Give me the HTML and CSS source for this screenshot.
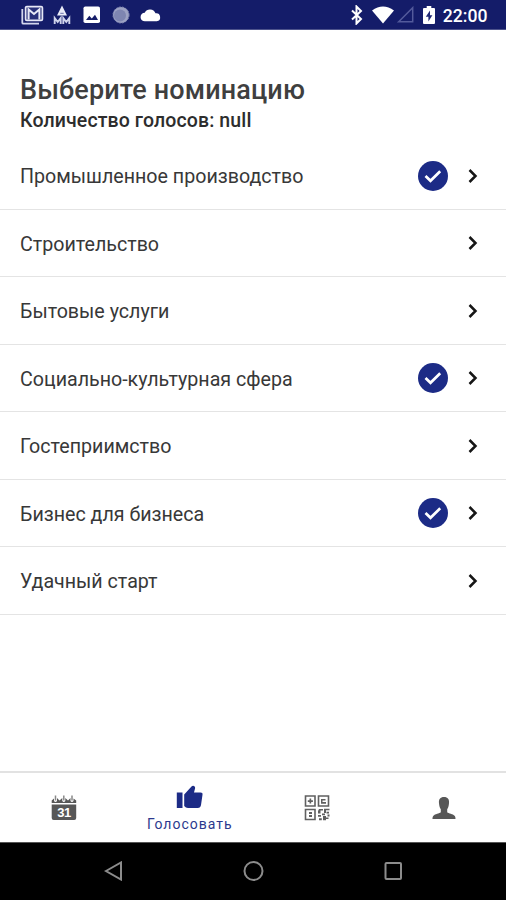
FILE: index.html
```html
<!DOCTYPE html>
<html lang="ru">
<head>
<meta charset="utf-8">
<title>Выберите номинацию</title>
<link rel="stylesheet" href="styles.css">
</head>
<body>
<svg class="defs" aria-hidden="true">
  <symbol id="check" viewBox="0 0 30 30"><circle cx="15" cy="15" r="15" fill="#1c2b86"/><path d="M7.500 15l5 4.800 9.700-9.500" fill="none" stroke="#fff" stroke-width="2.700"/></symbol>
  <symbol id="chevron" viewBox="0 0 10 14"><path d="M1.500 1l6 6-6 6" fill="none" stroke="#161616" stroke-width="2.500"/></symbol>
</svg>
<div class="screen">
  <header class="status">
    <div class="status-left">
      <svg width="23" height="20" viewBox="0 0 23 20"><path d="M1.300 4v13.700q0 1 1 1H18" fill="none" stroke="#d3d6ed" stroke-width="1.800"/><rect x="4.600" y="1.600" width="16.800" height="13.800" rx="1.200" fill="#28307a" stroke="#e6e8f6" stroke-width="1.700"/><path d="M7.600 14.500V4.500L13 9l5.400-4.500v10" fill="none" stroke="#e6e8f6" stroke-width="2"/></svg>
      <svg width="18" height="20" viewBox="0 0 18 20"><path d="M9 .5l5 10H4z" fill="#e9ebf7"/><path d="M7.300 8.300h3.400" stroke="#6970a8"/><path d="M1.700 19v-6l3 4 3-4v6M10.300 19v-6l3 4 3-4v6" fill="none" stroke="#cfd3eb" stroke-width="1.900"/></svg>
      <svg width="18" height="18" viewBox="0 0 18 18"><rect x=".5" y=".5" width="16.500" height="16.500" rx="1.800" fill="#fff"/><path d="M3 14l3.300-4.200 2.500 2.700 3.200-3.700 3 5.200z" fill="#161d69"/></svg>
      <svg width="18" height="18" viewBox="0 0 18 18"><circle cx="9" cy="9" r="8" fill="#9da2c4" stroke="#888eb8" stroke-dasharray="2 1.200"/><circle cx="8" cy="9.500" r="6" fill="#7e85b1"/></svg>
      <svg width="21" height="14" viewBox="0 0 21 14"><path d="M5 13.300A4.300 4.300 0 0 1 4.700 4.700 6 6 0 0 1 15.500 5.300 4 4 0 0 1 16.700 13.300z" fill="#fff"/></svg>
    </div>
    <div class="status-right">
      <svg width="12" height="20" viewBox="0 0 12 20"><path d="M1 5.500l9 8.500-4.500 4.500v-17L10 6l-9 8.500" fill="none" stroke="#fff" stroke-width="2"/></svg>
      <svg width="22" height="18" viewBox="0 0 22 18"><path d="M0 4.500Q11-3.500 22 4.500L11 17.500z" fill="#fff"/></svg>
      <svg width="17" height="17" viewBox="0 0 17 17"><path d="M1.700 15.700L15.700 1.700v14z" fill="none" stroke="#535a9b" stroke-width="1.500"/></svg>
      <svg width="12" height="18" viewBox="0 0 12 18"><path d="M3.700 0h4.600v2H11q1 0 1 1v14q0 1-1 1H1q-1 0-1-1V3q0-1 1-1h2.700z" fill="#fff"/><path d="M7 4.500L2.800 10.700h2.600v4.800l4-6.200H7z" fill="#202875"/></svg>
      <span class="clock">22:00</span>
    </div>
  </header>
  <main>
    <h1>Выберите номинацию</h1>
    <p class="votes">Количество голосов: null</p>
    <ul>
      <li><span class="name">Промышленное производство</span><svg class="check"><use href="#check"/></svg><svg class="chevron"><use href="#chevron"/></svg></li>
      <li><span class="name">Строительство</span><svg class="chevron"><use href="#chevron"/></svg></li>
      <li><span class="name">Бытовые услуги</span><svg class="chevron"><use href="#chevron"/></svg></li>
      <li><span class="name">Социально-культурная сфера</span><svg class="check"><use href="#check"/></svg><svg class="chevron"><use href="#chevron"/></svg></li>
      <li><span class="name">Гостеприимство</span><svg class="chevron"><use href="#chevron"/></svg></li>
      <li><span class="name">Бизнес для бизнеса</span><svg class="check"><use href="#check"/></svg><svg class="chevron"><use href="#chevron"/></svg></li>
      <li><span class="name">Удачный старт</span><svg class="chevron"><use href="#chevron"/></svg></li>
    </ul>
  </main>
  <nav class="tabs">
    <a><svg width="26" height="26" viewBox="0 0 26 26"><path d="M.7 8V5.500L3 3.500V6q1.500 2 3 0V3l2.500 2.500L11.300 3v3q1.500 2 3 0V3l2.700 2.500L19.500 3v3q1.500 2 3 0V3.500l2.700 2V8z" fill="#575757"/><path d="M4.500 .5v5M12.800 .5v5M21 .5v5" stroke="#888" stroke-width="1.500"/><path d="M.7 9.500h24.500V23q0 2-2 2H2.700q-2 0-2-2z" fill="#575757"/><text x="13" y="22.300" class="date">31</text></svg></a>
    <a class="active"><svg width="27" height="24" viewBox="0 0 27 24"><path d="M.8 7.500H6.500V23H.8zM8.200 9.500L15.500 1.500q1.200-1.200 2.500-.5 1.500.8 1.100 2.300L18 7.500h6.500q2.400 0 2 2.200L25 20q-.5 3-3.200 3H12q-2.200 0-3.800-2z" fill="#1c2b86"/></svg><span>Голосовать</span></a>
    <a><svg width="26" height="26" viewBox="0 0 26 26" fill="none" stroke="#606060" stroke-width="1.600"><path d="M1.500 1h9.500v10H1.500zM14.500 1H24.500v10h-10zM1.500 14.500H11v10H1.500z"/><g fill="#606060" stroke="none"><path d="M5.500 3.500h1.700v1.700h1.700v1.700H7.200v1.700H5.500V6.900H3.800V5.200h1.700zM17 4h4.500v1.500h-3v1.500H22v1.700h-5zM5 17h3v2H5zM5 20h3v2H5z"/><path d="M15 14h4v1.600h-2.500v3H14V16zM20 13.800h5.500v1.500H22V18h-2zM18 18.500h3v1.700h-3zM22.500 16.800H25v1.800h-2.500zM14 20h3v1.800h-3zM19 21h3v1.500h2.500V24H22v1.300h-3zM23.500 19.500h2v2h-2zM15 23.300h2.800v2H15z"/></g></svg></a>
    <a><svg width="24" height="24" viewBox="0 0 24 24"><path d="M12 1c3.800 0 5.500 2.500 5 6.200-.2 3-1 4.800-1.800 6v3.100c1.300 1.200 5.900 1.700 7.400 3.500.8 1 .9 2 .9 3.200H.5c0-1.200.1-2.200.9-3.200 1.500-1.800 6.100-2.300 7.400-3.500v-3.100C8 12 7.200 10.200 7 7.200 6.500 3.500 8.200 1 12 1z" fill="#575757"/></svg></a>
  </nav>
  <footer class="system">
    <svg width="20" height="20" viewBox="0 0 20 20"><path d="M3 10L18 1.500v17z"/></svg>
    <svg width="21" height="20" viewBox="0 0 21 20"><circle cx="10.500" cy="10" r="9"/></svg>
    <svg width="20" height="20" viewBox="0 0 20 20"><rect x="2.500" y="2" width="15.500" height="16" rx="1"/></svg>
  </footer>
</div>
</body>
</html>
```

FILE: styles.css
```css
* { box-sizing: border-box; }
body { margin: 0; font-family: Roboto, sans-serif; background: #fff; color: #383838; }
svg { display: block; flex: none; }
.defs { position: absolute; width: 0; height: 0; }
.screen { width: 506px; height: 900px; display: flex; flex-direction: column; overflow: hidden; }
.status { height: 30px; flex: none; background: #141c69; border-bottom: 1px solid #4d538c; display: flex; align-items: center; justify-content: space-between; padding: 0 18.500px 0 21px; }
.status-left { display: flex; align-items: center; gap: 9.500px; }
.status-left svg:nth-child(2) { margin-left: -1px; }
.status-left svg:nth-child(3) { margin-left: 3px; }
.status-left svg:nth-child(4) { margin-left: 1px; }
.status-left svg:nth-child(5) { margin-left: 1px; }
.status-right { display: flex; align-items: center; }
.status-right svg:nth-child(1) { margin-right: 9px; }
.status-right svg:nth-child(2) { margin-right: 3px; }
.status-right svg:nth-child(3) { margin-right: 9px; }
.status-right svg:nth-child(4) { margin-right: 8px; }
.clock { color: #fff; font-size: 17.600px; font-weight: 500; line-height: 28px; padding-top: 2px; }
main { flex: 1; padding-top: 43px; }
h1 { margin: 0; padding-left: 20px; font-size: 27px; line-height: 34px; font-weight: 500; letter-spacing: .13px; color: #3f3f3f; white-space: nowrap; }
.votes { margin: 0; padding-left: 20px; font-size: 19.500px; line-height: 28px; font-weight: 500; letter-spacing: .12px; color: #2d2d2d; white-space: nowrap; }
ul { list-style: none; margin: 7px 0 0; padding: 0; }
li { height: 67.500px; display: flex; align-items: center; padding: 1px 28px 0 20px; border-bottom: 1px solid #e4e4e4; }
.name { flex: 1; font-size: 19.650px; line-height: 28px; white-space: nowrap; padding-top: 3px; }
.check { width: 30px; height: 30px; margin-right: 20px; }
.chevron { width: 10px; height: 14px; }
.tabs { height: 71px; flex: none; border-top: 2px solid #e2e2e2; display: grid; grid-template-columns: repeat(4, 1fr); }
.tabs a { display: flex; flex-direction: column; align-items: center; justify-content: center; }
.tabs a:not(.active) { padding-left: 1.500px; }
.tabs .active { padding-top: 2px; }
.tabs span { font-size: 14px; line-height: 18px; letter-spacing: 1px; color: #2c398e; margin-top: 6px; }
.date { font: 700 13px "Liberation Sans", sans-serif; letter-spacing: -.5px; fill: #fff; text-anchor: middle; }
.system { height: 58px; flex: none; background: #000; display: flex; align-items: center; justify-content: space-between; padding: 0 103px 2px; border-top: 1px solid #555; }
.system svg { fill: none; stroke: #8c8c8c; stroke-width: 2; }
```
